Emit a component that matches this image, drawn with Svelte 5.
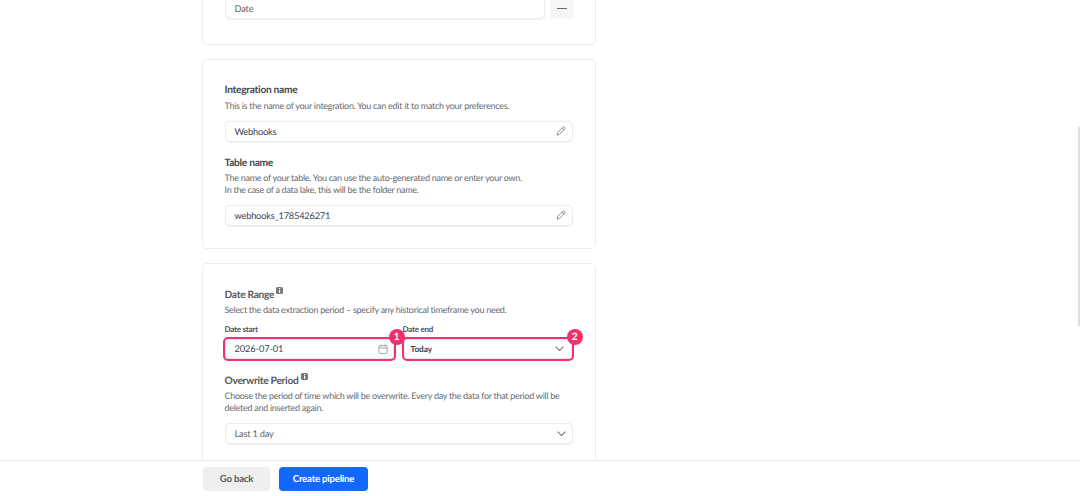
<script>
  const tableHelp = [
    'The name of your table. You can use the auto-generated name or enter your own.',
    'In the case of a data lake, this will be the folder name.'
  ];
</script>

{#snippet pencil()}
  <svg class="icon" width="10" height="10" viewBox="0 0 12 12" fill="none" stroke="#777c85" stroke-width="1" stroke-linejoin="round" stroke-linecap="round">
    <path d="M1.5 10.5 L2.2 7.6 L8.2 1.6 C8.8 1 9.6 1 10.2 1.6 L10.4 1.8 C11 2.4 11 3.2 10.4 3.8 L4.4 9.8 Z" />
    <path d="M7.3 2.6 L9.4 4.7" />
  </svg>
{/snippet}

{#snippet chevron()}
  <svg class="icon chev" width="9" height="5.5" viewBox="0 0 10 6" fill="none" stroke="#6f7683" stroke-width="1.2" stroke-linecap="round" stroke-linejoin="round">
    <path d="M1 1 L5 5 L9 1" />
  </svg>
{/snippet}

{#snippet info()}
  <svg class="info" width="7" height="7" viewBox="0 0 7 7">
    <rect width="7" height="7" rx="1.6" fill="#777" />
    <rect x="3" y="1" width="1.2" height="1.1" fill="#fff" />
    <rect x="3" y="2.8" width="1.2" height="3" fill="#fff" />
  </svg>
{/snippet}

<div class="page">
  <main>
    <div class="column">
      <section class="card first">
        <div class="filter-row">
          <div class="field grow"><span class="muted">Date</span></div>
          <button class="remove" aria-label="Remove"><span></span></button>
        </div>
      </section>

      <section class="card names">
        <h3>Integration name</h3>
        <p>This is the name of your integration. You can edit it to match your preferences.</p>
        <div class="field"><span>Webhooks</span>{@render pencil()}</div>

        <h3 class="second">Table name</h3>
        <p class="tight">{tableHelp[0]}<br />{tableHelp[1]}</p>
        <div class="field"><span>webhooks_1785426271</span>{@render pencil()}</div>
      </section>

      <section class="card dates">
        <h3 class="soft">Date Range {@render info()}</h3>
        <p class="tight">Select the data extraction period – specify any historical timeframe you need.</p>

        <div class="date-grid">
          <div class="date-col">
            <label for="start">Date start</label>
            <div class="field marked" id="start">
              <span class="date-value">2026-07-01</span>
              <svg class="icon" width="10" height="10" viewBox="0 0 10 10" fill="none" stroke="#8a8f96" stroke-width="0.8">
                <rect x="0.9" y="1.6" width="8.2" height="7.8" rx="1.2" />
                <path d="M0.9 3.9 H9.1 M3 0.5 V2.4 M7 0.5 V2.4" />
              </svg>
              <b class="badge">1</b>
            </div>
          </div>
          <div class="date-col end">
            <label for="end">Date end</label>
            <div class="field marked small" id="end">
              <span>Today</span>{@render chevron()}
              <b class="badge">2</b>
            </div>
          </div>
        </div>

        <h3 class="soft overwrite">Overwrite Period {@render info()}</h3>
        <p class="tight">Choose the period of time which will be overwrite. Every day the data for that period will be deleted and inserted again.</p>
        <div class="field"><span class="muted">Last 1 day</span>{@render chevron()}</div>
      </section>
    </div>
  </main>

  <footer>
    <button class="back">Go back</button>
    <button class="create">Create pipeline</button>
  </footer>

  <div class="scrollbar"></div>
</div>

<style>
  :global(body) {
    margin: 0;
    background: #fff;
  }

  .page {
    position: relative;
    display: flex;
    flex-direction: column;
    height: 496px;
    overflow: hidden;
    font-family: Lato, "Liberation Sans", sans-serif;
    text-rendering: geometricPrecision;
    color: #3f434a;
  }

  main {
    flex: 1;
    min-height: 0;
    overflow: hidden;
  }

  .column {
    display: flex;
    flex-direction: column;
    gap: 14px;
    width: 394px;
    margin-left: 201.5px;
    margin-top: -21px;
  }

  .card {
    box-sizing: border-box;
    padding: 0 22px;
    background: #fff;
    border: 1px solid #ececed;
    border-radius: 5px;
  }

  .first {
    height: 66px;
    padding-top: 18px;
  }

  .names {
    height: 190px;
    padding-top: 23px;
  }

  .dates {
    height: 240px;
    padding-top: 23px;
  }

  h3 {
    margin: 0;
    font-size: 10.2px;
    line-height: 14px;
    letter-spacing: -0.28px;
    font-weight: 700;
    color: #43464d;
  }

  h3.second {
    margin-top: 14px;
  }

  h3.soft {
    color: #55585e;
  }

  h3.overwrite {
    margin-top: 14px;
  }

  p {
    margin: 3px 0 8px;
    font-size: 9px;
    line-height: 12.6px;
    letter-spacing: -0.28px;
    color: #666a70;
  }

  p.tight {
    margin-top: 2px;
  }

  .info {
    vertical-align: 4px;
    margin-left: 0;
  }

  .field {
    position: relative;
    box-sizing: border-box;
    display: flex;
    align-items: center;
    justify-content: space-between;
    height: 21px;
    padding: 0 6px 0 9px;
    background: #fff;
    border: 1px solid #ececee;
    border-radius: 5px;
    box-shadow: 0 0.5px 1px rgba(0, 0, 0, 0.06);
    font-size: 9.3px;
    letter-spacing: -0.23px;
    color: #3a4256;
  }

  .field.grow {
    flex: 1;
  }

  .muted {
    color: #5f6268;
  }

  .date-value {
    letter-spacing: -0.12px;
  }

  .icon {
    flex: none;
  }

  .filter-row {
    display: flex;
    gap: 5px;
    align-items: center;
    margin-right: -1px;
  }

  .remove {
    display: flex;
    align-items: center;
    justify-content: center;
    width: 24px;
    height: 21px;
    padding: 0;
    border: 0;
    border-radius: 4px;
    background: #f6f6f6;
  }

  .remove span {
    width: 10px;
    height: 1.4px;
    background: #6b6b6b;
  }

  .date-grid {
    display: flex;
    gap: 10px;
    margin-top: -2px;
  }

  .date-col {
    width: 169px;
  }

  .date-col.end {
    width: 168px;
  }

  .date-col.end label {
    margin-left: -1px;
  }

  label {
    display: block;
    height: 15px;
    font-size: 8px;
    line-height: 12px;
    letter-spacing: -0.25px;
    font-weight: 700;
    color: #4c4f55;
  }

  .field.marked {
    height: 20px;
    margin-top: 1px;
    outline: 2px solid #f4306c;
    border-radius: 3px;
    padding-right: 5px;
  }

  .field.small {
    font-size: 8.3px;
    letter-spacing: -0.1px;
    font-weight: 700;
    padding-left: 6px;
    padding-right: 7px;
  }

  .badge {
    position: absolute;
    top: -11px;
    right: -12px;
    width: 16px;
    height: 16px;
    border-radius: 50%;
    background: #f4306c;
    color: #fff;
    font-size: 10px;
    line-height: 16px;
    text-align: center;
    font-weight: 700;
  }

  footer {
    flex: none;
    box-sizing: border-box;
    height: 36px;
    display: flex;
    gap: 9px;
    align-items: flex-start;
    padding: 6px 0 0 203px;
    background: #fff;
    border-top: 1px solid #ececec;
  }

  footer button {
    height: 24px;
    padding: 0;
    border: 0;
    border-radius: 4px;
    font-family: inherit;
    font-size: 9.6px;
    letter-spacing: -0.2px;
    font-weight: 700;
    text-rendering: geometricPrecision;
  }

  .back {
    width: 67px;
    background: #efefef;
    color: #55585e;
  }

  .create {
    width: 89px;
    background: #1268fb;
    color: #fff;
  }

  .scrollbar {
    position: absolute;
    top: 127px;
    right: 0;
    width: 2px;
    height: 199px;
    background: #dcdcdc;
  }
</style>
